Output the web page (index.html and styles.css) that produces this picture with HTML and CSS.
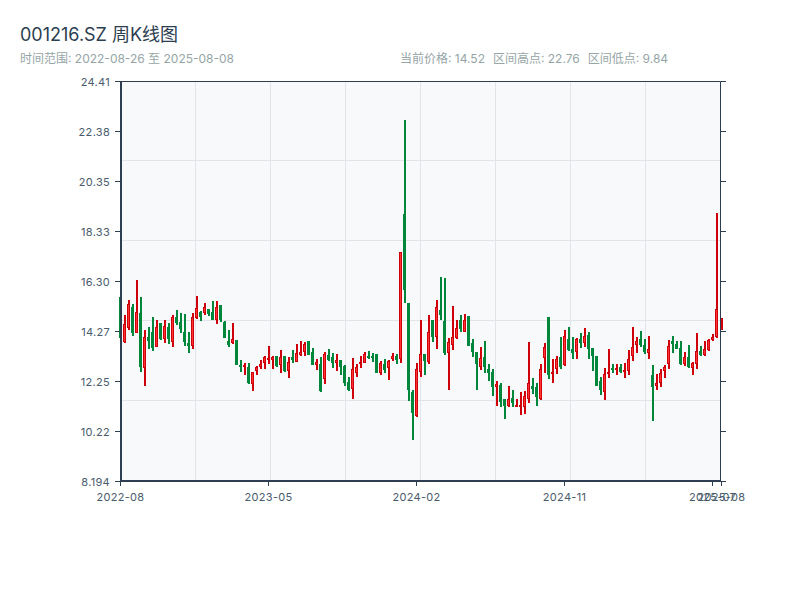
FILE: index.html
```html
<!DOCTYPE html>
<html lang="zh">
<head>
    <meta charset="UTF-8">
    <meta name="viewport" content="width=device-width, initial-scale=1.0">
    <title>001216.SZ 周K线图</title>
    <link rel="stylesheet" href="styles.css">
</head>
<body>
    <div class="header">
        <h1 class="title">001216.SZ 周K线图</h1>
        <div class="sub-row">
            <div class="range">时间范围: 2022-08-26 至 2025-08-08</div>
            <div class="stats">
                <span>当前价格: 14.52</span>
                <span>区间高点: 22.76</span>
                <span>区间低点: 9.84</span>
            </div>
        </div>
    </div>
    <svg id="chart" class="chart" viewBox="0 70 800 530" width="800" height="530"></svg>
    <script src="chart.js"></script>
</body>
</html>
```

FILE: styles.css
```css
* {
    box-sizing: border-box;
}

body {
    margin: 0;
    width: 800px;
    height: 600px;
    overflow: hidden;
    background: #fff;
    font-family: Inter, "Noto Sans CJK SC", sans-serif;
}

.header {
    height: 70px;
    padding: 23px 20px 0;
}

.title {
    margin: 0;
    font-size: 18px;
    line-height: 24px;
    font-weight: 400;
    color: #2c3e50;
}

.sub-row {
    display: flex;
    margin-top: 4px;
    font-size: 12px;
    line-height: 16px;
    color: #95a5a6;
}

.range {
    width: 380px;
}

.stats {
    display: flex;
    gap: 8px;
}

.chart {
    display: block;
}

.plot-bg {
    fill: #f8f9fa;
}

.grid-line {
    stroke: #e1e5ea;
    stroke-width: 1;
}

.axis-main {
    stroke: #2c3e50;
    stroke-width: 2;
}

.axis-thin {
    stroke: #2c3e50;
    stroke-width: 1;
}

.tick-label {
    font-size: 11px;
    letter-spacing: 0.3px;
    fill: #4a5b6c;
}

.wick-up {
    stroke: #d0000a;
    stroke-width: 2;
}

.wick-down {
    stroke: #00873c;
    stroke-width: 2;
}

.body-up {
    fill: #ff3333;
    stroke: #d0000a;
    stroke-width: 1;
}

.body-down {
    fill: #00873c;
}
```

FILE: chart.js
```js
const SVG_NS = 'http://www.w3.org/2000/svg';
const chart = document.getElementById('chart');

const PLOT = { left: 120.5, right: 720.5, top: 81.5, bottom: 481 };
const STEP = 600.5 / 150;

// one row per week: up/down, high, body top, body bottom, low (page y)
const candles = [
    ['d', 297, 297, 338, 338], ['u', 315, 324, 342, 343], ['u', 300, 304, 328, 330], ['d', 304, 307, 333, 336],
    ['u', 280, 312, 333, 333], ['d', 297, 313, 367, 372], ['u', 330, 337, 368, 386], ['d', 327, 337, 341, 349],
    ['d', 317, 332, 348, 351], ['u', 320, 327, 347, 347], ['d', 323, 323, 339, 340], ['u', 320, 326, 339, 343],
    ['d', 323, 327, 339, 344], ['u', 315, 317, 342, 347], ['d', 310, 317, 323, 325], ['d', 313, 322, 329, 333],
    ['d', 314, 332, 342, 346], ['d', 332, 343, 346, 353], ['u', 313, 317, 346, 349], ['u', 296, 308, 318, 319],
    ['d', 311, 312, 317, 321], ['u', 303, 307, 313, 315], ['d', 309, 309, 314, 316], ['d', 301, 312, 320, 320],
    ['u', 301, 307, 320, 324], ['d', 305, 305, 320, 322], ['d', 321, 322, 338, 338], ['d', 330, 341, 345, 347],
    ['u', 323, 339, 343, 344], ['d', 340, 340, 365, 365], ['d', 360, 365, 367, 372], ['u', 363, 365, 367, 375],
    ['d', 363, 367, 383, 384], ['u', 372, 372, 384, 391], ['u', 366, 367, 371, 375], ['u', 360, 364, 367, 369],
    ['u', 356, 357, 363, 369], ['u', 346, 358, 360, 364], ['u', 356, 357, 360, 369], ['d', 356, 356, 366, 367],
    ['u', 350, 357, 365, 373], ['d', 356, 356, 371, 372], ['u', 357, 362, 371, 378], ['d', 350, 357, 360, 363],
    ['u', 344, 353, 362, 362], ['u', 341, 352, 355, 356], ['u', 342, 344, 352, 356], ['d', 341, 341, 355, 355],
    ['d', 348, 352, 365, 365], ['u', 359, 362, 365, 370], ['d', 357, 364, 391, 392], ['u', 352, 354, 379, 384],
    ['d', 349, 355, 360, 361], ['d', 353, 357, 363, 368], ['u', 354, 360, 363, 371], ['d', 360, 360, 367, 375],
    ['d', 365, 366, 383, 386], ['d', 377, 382, 390, 391], ['u', 358, 369, 389, 399], ['u', 364, 367, 373, 377],
    ['u', 356, 362, 364, 368], ['u', 352, 354, 363, 363], ['d', 351, 356, 358, 359], ['d', 353, 356, 358, 362],
    ['d', 354, 354, 373, 373], ['u', 361, 363, 373, 375], ['d', 359, 364, 370, 373], ['u', 360, 361, 368, 380],
    ['u', 353, 356, 359, 361], ['d', 354, 356, 360, 364], ['u', 252, 252, 359, 363], ['d', 120, 214, 290, 303],
    ['d', 303, 303, 390, 401], ['d', 390, 392, 413, 440], ['u', 363, 369, 416, 417], ['u', 320, 354, 372, 377],
    ['d', 354, 354, 361, 375], ['u', 315, 332, 362, 364], ['d', 320, 320, 337, 342], ['u', 300, 307, 337, 349],
    ['d', 277, 310, 315, 320], ['d', 278, 321, 353, 355], ['u', 338, 342, 353, 390], ['u', 306, 337, 345, 350],
    ['u', 320, 328, 338, 339], ['d', 315, 320, 329, 332], ['u', 314, 320, 332, 332], ['d', 316, 316, 346, 346],
    ['d', 339, 343, 352, 357], ['d', 352, 352, 364, 390], ['u', 347, 358, 367, 370], ['d', 341, 357, 367, 373],
    ['d', 364, 369, 373, 381], ['d', 369, 372, 387, 396], ['u', 381, 384, 387, 406], ['d', 383, 385, 402, 407],
    ['d', 399, 399, 406, 419], ['u', 386, 399, 406, 407], ['d', 390, 398, 403, 407], ['u', 399, 405, 407, 407],
    ['u', 392, 405, 407, 415], ['u', 391, 396, 407, 414], ['u', 342, 383, 399, 403], ['d', 378, 386, 389, 394],
    ['d', 383, 387, 397, 406], ['u', 364, 369, 399, 400], ['u', 343, 347, 358, 373], ['d', 317, 317, 375, 379],
    ['u', 359, 372, 374, 383], ['u', 356, 359, 369, 374], ['d', 337, 357, 367, 369], ['u', 330, 336, 365, 366],
    ['d', 327, 339, 350, 351], ['d', 337, 349, 353, 359], ['u', 338, 339, 352, 359], ['d', 333, 339, 343, 348],
    ['u', 328, 336, 343, 347], ['d', 332, 335, 349, 359], ['d', 348, 348, 356, 371], ['d', 356, 356, 386, 386],
    ['d', 377, 381, 390, 395], ['u', 368, 374, 392, 400], ['u', 349, 372, 374, 378], ['d', 364, 368, 370, 373],
    ['u', 364, 368, 370, 375], ['d', 364, 367, 372, 373], ['u', 363, 370, 372, 378], ['u', 350, 359, 371, 375],
    ['u', 327, 347, 356, 361], ['u', 337, 341, 345, 353], ['d', 331, 339, 345, 347], ['d', 339, 345, 352, 354],
    ['u', 336, 349, 353, 359], ['d', 365, 375, 387, 421], ['u', 374, 383, 386, 390], ['u', 369, 373, 383, 387],
    ['u', 365, 367, 371, 378], ['u', 340, 346, 364, 369], ['d', 336, 341, 344, 353], ['d', 341, 344, 349, 349],
    ['d', 341, 348, 364, 365], ['u', 352, 357, 364, 366], ['d', 345, 357, 367, 368], ['u', 362, 363, 368, 375],
    ['u', 333, 351, 364, 369], ['d', 346, 351, 355, 356], ['u', 341, 349, 355, 356], ['u', 339, 340, 350, 351],
    ['u', 334, 337, 340, 341], ['u', 213, 309, 337, 338], ['u', 318, 323, 325, 330]
];

const yLabels = ['24.41', '22.38', '20.35', '18.33', '16.30', '14.27', '12.25', '10.22', '8.194'];
const xLabels = [
    ['2022-08', 0], ['2023-05', 37], ['2024-02', 74], ['2024-11', 111], ['2025-07', 148], ['2025-08', 150]
];

function add(tag, attrs, text) {
    const el = document.createElementNS(SVG_NS, tag);
    for (const [key, value] of Object.entries(attrs)) {
        el.setAttribute(key, value);
    }
    if (text) el.textContent = text;
    chart.appendChild(el);
}

function line(x1, y1, x2, y2, cls) {
    add('line', { x1, y1, x2, y2, class: cls });
}

// snap to whole pixels so the 2px wicks stay crisp
function candleX(i) {
    return Math.round(PLOT.left - 0.5 + i * STEP);
}

function drawGrid() {
    add('rect', {
        x: PLOT.left,
        y: PLOT.top,
        width: PLOT.right - PLOT.left,
        height: PLOT.bottom - PLOT.top,
        class: 'plot-bg'
    });
    for (let i = 1; i < 8; i++) {
        const x = PLOT.left + i * 75;
        line(x, PLOT.top, x, PLOT.bottom, 'grid-line');
    }
    for (let i = 1; i < 5; i++) {
        const y = PLOT.top - 1 + i * 80;
        line(PLOT.left, y, PLOT.right, y, 'grid-line');
    }
}

function drawCandles() {
    candles.forEach(([dir, high, top, bottom, low], i) => {
        const x = candleX(i);
        const up = dir === 'u';
        line(x + 1, high, x + 1, low, up ? 'wick-up' : 'wick-down');
        if (up) {
            add('rect', { x: x - 0.5, y: top + 0.5, width: 2, height: bottom - top - 1, class: 'body-up' });
        } else {
            add('rect', { x: x - 1, y: top, width: 3, height: bottom - top, class: 'body-down' });
        }
    });
}

function drawAxes() {
    line(121, 81, 121, 482, 'axis-main');
    line(120, 481, 721, 481, 'axis-main');
    line(PLOT.left, PLOT.top, PLOT.right, PLOT.top, 'axis-thin');
    line(PLOT.right, PLOT.top, PLOT.right, 482, 'axis-thin');

    yLabels.forEach((label, i) => {
        const y = 81.5 + i * 50;
        line(115, y, 120, y, 'axis-thin');
        line(PLOT.right, y, 726, y, 'axis-thin');
        add('text', { x: 110, y: y + 4, 'text-anchor': 'end', class: 'tick-label' }, label);
    });

    xLabels.forEach(([label, i]) => {
        const x = candleX(i) + 0.5;
        line(x, 481, x, 486, 'axis-thin');
        add('text', { x, y: 501, 'text-anchor': 'middle', class: 'tick-label' }, label);
    });
}

drawGrid();
drawCandles();
drawAxes();
```
